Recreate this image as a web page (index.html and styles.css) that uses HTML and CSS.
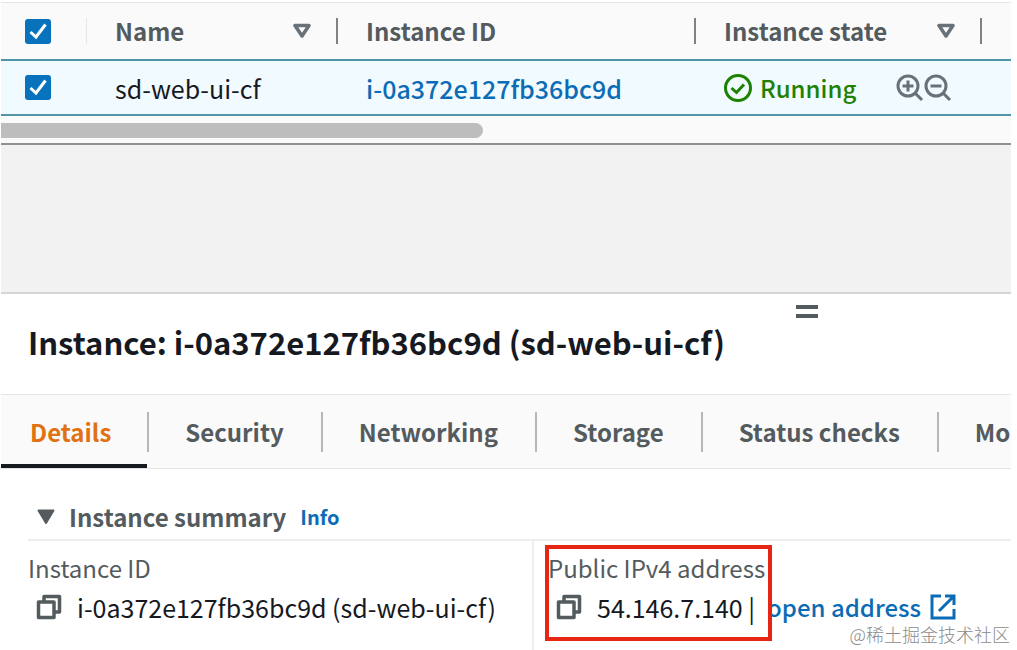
FILE: index.html
```html
<!DOCTYPE html>
<html lang="en">
<head>
<meta charset="utf-8">
<title>Instances</title>
<link rel="stylesheet" href="styles.css">
</head>
<body>
<svg class="defs" aria-hidden="true">
  <symbol id="copy" viewBox="0 0 26 26"><path d="M8 7V2.500H23.500V18H19M2.500 8H18V23.500H2.500Z" fill="none" stroke="currentColor" stroke-width="3.500" stroke-linejoin="round"/></symbol>
  <symbol id="sort" viewBox="0 0 18 16"><path d="M2 2.500H16L9 13Z" fill="none" stroke="currentColor" stroke-width="3.500" stroke-linejoin="round"/></symbol>
</svg>
<main class="console">
  <div class="table-wrap">
    <table class="instances">
      <colgroup><col class="c-check"><col class="c-name"><col class="c-id"><col class="c-state"><col></colgroup>
      <thead>
        <tr>
          <th><div class="head head-check"><label class="check"><input type="checkbox" checked aria-label="Select all"><svg viewBox="0 0 25 25"><path d="M5 13L10.500 18L20 5.500"/></svg></label></div></th>
          <th><div class="head">Name<button class="sort" aria-label="Sort by name"><svg><use href="#sort"/></svg></button></div></th>
          <th><div class="head">Instance ID</div></th>
          <th><div class="head">Instance state<button class="sort" aria-label="Sort by state"><svg><use href="#sort"/></svg></button></div></th>
          <th></th>
        </tr>
      </thead>
      <tbody>
        <tr>
          <td><div class="cell cell-check"><label class="check"><input type="checkbox" checked aria-label="Select sd-web-ui-cf"><svg viewBox="0 0 25 25"><path d="M5 13L10.500 18L20 5.500"/></svg></label></div></td>
          <td><div class="cell">sd-web-ui-cf</div></td>
          <td><div class="cell"><a href="#">i-0a372e127fb36bc9d</a></div></td>
          <td><div class="cell">
            <span class="status"><svg class="ok" viewBox="0 0 28 28"><circle cx="14" cy="14" r="12.500"/><path d="M7.500 14L12.500 18.500L20 10.500"/></svg>Running</span>
            <span class="zooms">
              <button aria-label="Filter in"><svg viewBox="0 0 28 28"><circle cx="12" cy="12" r="10"/><path d="M19 19L26 26M12 6.500V17.500M6.500 12H17.500"/></svg></button>
              <button aria-label="Filter out"><svg viewBox="0 0 28 28"><circle cx="12" cy="12" r="10"/><path d="M19 19L26 26M6.500 12H17.500"/></svg></button>
            </span>
          </div></td>
          <td></td>
        </tr>
      </tbody>
    </table>
    <div class="scroll"><div class="thumb"></div></div>
  </div>
  <div class="gap"></div>
  <section class="panel">
    <header class="panel-head">
      <button class="grip" aria-label="Resize panel"></button>
      <h1>Instance: i-0a372e127fb36bc9d (sd-web-ui-cf)</h1>
    </header>
    <nav class="tabs">
      <button class="tab active">Details</button>
      <button class="tab">Security</button>
      <button class="tab">Networking</button>
      <button class="tab">Storage</button>
      <button class="tab">Status checks</button>
      <button class="tab">Mo</button>
    </nav>
    <div class="summary">
      <h2><svg class="caret" viewBox="0 0 18 16"><path d="M1.500 1.500H16.500L9 14Z"/></svg>Instance summary<a href="#" class="info">Info</a></h2>
      <div class="fields">
        <div class="field">
          <div class="label">Instance ID</div>
          <div class="value"><button class="copy" aria-label="Copy ID"><svg><use href="#copy"/></svg></button>i-0a372e127fb36bc9d (sd-web-ui-cf)</div>
        </div>
        <div class="field field-ip">
          <div class="highlight"></div>
          <div class="label">Public IPv4 address</div>
          <div class="value"><button class="copy" aria-label="Copy address"><svg><use href="#copy"/></svg></button><span class="ip">54.146.7.140 |</span><a href="#" class="open">open address<svg viewBox="0 0 26 26"><path d="M11 2H2V24H24V15M15 2H24V11M23 3L9 17"/></svg></a></div>
        </div>
      </div>
    </div>
  </section>
</main>
<div class="watermark">@稀土掘金技术社区</div>
</body>
</html>
```
FILE: styles.css
```css
* { box-sizing: border-box; }
body {
  margin: 0;
  background: #fff;
  color: #16191f;
  font: 24px/32px "Noto Sans CJK SC", "Noto Sans", sans-serif;
  overflow: hidden;
}
button { background: none; border: 0; padding: 0; font: inherit; color: inherit; display: flex; }
a { color: #0b6cb5; text-decoration: none; font-weight: 500; }
.defs { position: absolute; width: 0; height: 0; }
.console { margin: 2px 6px 0 1px; overflow: hidden; }

.table-wrap { background: #fafafa; border-top: 1px solid #e5e7e7; border-bottom: 2px solid #8e9191; }
.instances { width: 100%; table-layout: fixed; border-collapse: separate; border-spacing: 0; }
.c-check { width: 86px; }
.c-name { width: 251px; }
.c-id { width: 358px; }
.c-state { width: 286px; }
th, td { padding: 0; text-align: left; white-space: nowrap; }
th { height: 56px; color: #545b5e; }
td { height: 57px; background: #f1faff; border-top: 2px solid #5195a9; border-bottom: 2px solid #5195a9; }
.head { display: flex; align-items: center; justify-content: space-between; height: 26px; padding: 0 25px 0 28px; border-right: 2px solid #7d8286; }
.head-check { padding: 0 0 0 24px; border-right: 1px solid #e5e7e7; }
.cell { display: flex; align-items: center; padding-left: 28px; font-size: 25px; }
.cell-check { padding-left: 24px; }
.check { display: grid; width: 26px; height: 25px; }
.check input, .check svg { grid-area: 1 / 1; width: 100%; height: 100%; margin: 0; }
.check input { appearance: none; border-radius: 3px; background: #0972bd; }
.check svg { fill: none; stroke: #fff; stroke-width: 3; pointer-events: none; }
.sort svg { width: 18px; height: 16px; color: #687078; }
.status { display: flex; align-items: center; gap: 8px; color: #1d8102; font-size: 24px; font-weight: 500; }
.status svg, .zooms svg { width: 28px; height: 28px; fill: none; stroke: currentColor; stroke-width: 3; }
.zooms { display: flex; gap: 0; margin-left: 40px; color: #687078; }
.scroll { padding: 7px 0 5px; }
.thumb { width: 482px; height: 15px; border-radius: 0 8px 8px 0; background: #bdbdbd; }
.gap { height: 149px; background: #f2f2f2; border-bottom: 2px solid #d5d5d5; }

.panel-head { display: flex; flex-direction: column; padding: 11px 27px 35px; }
.grip { width: 22px; height: 13px; margin-left: 768px; border: solid #545b5e; border-width: 4px 0; }
h1 { margin: 7px 0 0; font-size: 31px; line-height: 34px; white-space: nowrap; }
.tabs { display: flex; background: #fafafa; border: solid #e5e7e7; border-width: 1px 0; }
.tab { flex: none; position: relative; height: 73px; align-items: center; padding: 0 37px 0 38px; color: #545b5e; font-weight: 700; }
.tab + .tab::before { content: ""; position: absolute; left: 0; top: 17px; width: 2px; height: 40px; background: #b4b8bb; }
.tab.active { padding: 0 36px 0 29px; color: #e07212; box-shadow: inset 0 -4px #16191f; }
.summary { padding: 32px 0 0 27px; }
h2 { display: flex; align-items: center; margin: 0; padding: 0 0 6px 8px; font-size: 24px; line-height: 32px; color: #545b5e; border-bottom: 2px solid #eee; }
.caret { width: 20px; height: 16px; margin-right: 13px; fill: currentColor; stroke: currentColor; stroke-width: 2; stroke-linejoin: round; }
.info { margin-left: 14px; font-size: 20px; font-weight: 700; }
.fields { display: grid; grid-template-columns: 504px 1fr; }
.field { padding: 11px 0 30px; white-space: nowrap; }
.field-ip { position: relative; padding-left: 14px; border-left: 2px solid #eee; }
.label { color: #545b5e; }
.value { display: flex; align-items: center; padding: 7px 0 0 8px; font-size: 25px; }
.copy { margin-right: 15px; color: #545b5e; }
.copy svg { width: 26px; height: 26px; }
.open { display: flex; align-items: center; gap: 9px; margin-left: 12px; font-size: 24px; }
.open svg { width: 26px; height: 26px; fill: none; stroke: currentColor; stroke-width: 3; }
.highlight { position: absolute; left: 11px; top: 4px; width: 227px; height: 96px; border: 4px solid #e62613; }
.watermark { position: absolute; right: 7px; bottom: 4px; font: 300 18px/24px "Noto Sans CJK SC", sans-serif; color: #8a8a8a; }
```
